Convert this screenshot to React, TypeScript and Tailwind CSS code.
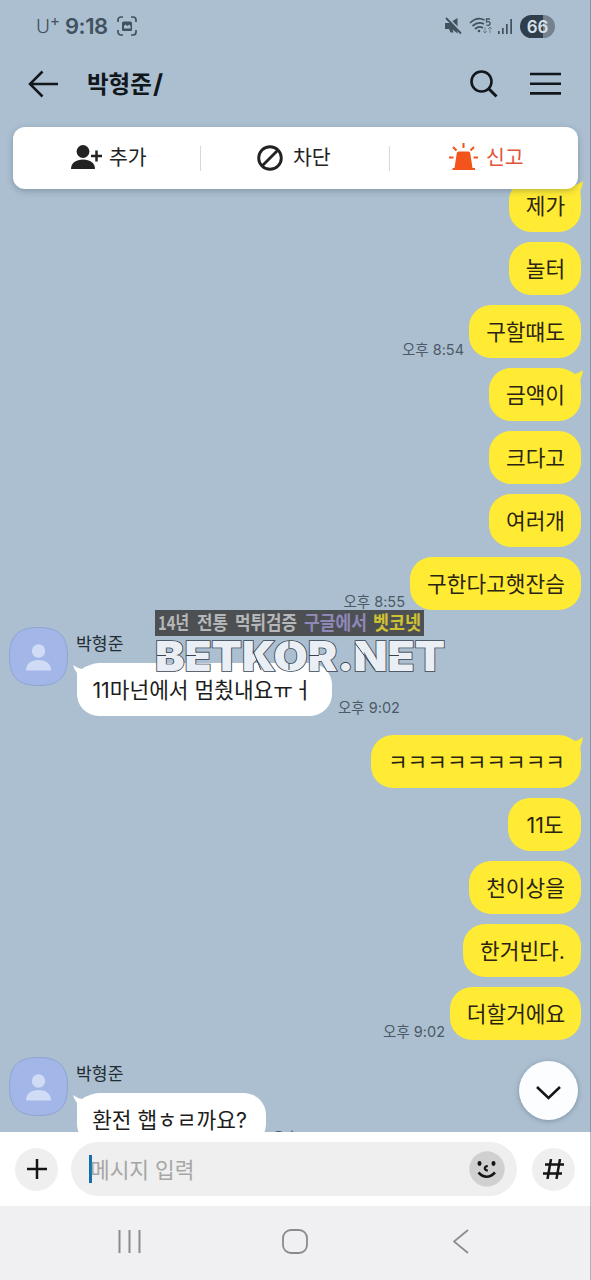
import React from 'react';

// ============================================
// TYPES
// ============================================

interface SentMessage {
  text: string;
  width: string;
  time?: string;
  tail?: boolean;
}

// ============================================
// DATA
// ============================================

const firstBlock: SentMessage[] = [
  { text: '제가', width: 'w-[72px]', tail: true },
  { text: '놀터', width: 'w-[72px]' },
  { text: '구할떄도', width: 'w-[112px]', time: '오후 8:54' },
  { text: '금액이', width: 'w-[92px]', tail: true },
  { text: '크다고', width: 'w-[92px]' },
  { text: '여러개', width: 'w-[92px]' },
  { text: '구한다고햇잔슴', width: 'w-[171px]', time: '오후 8:55' },
];

const secondBlock: SentMessage[] = [
  { text: 'ㅋㅋㅋㅋㅋㅋㅋㅋㅋ', width: 'w-[210px]', tail: true },
  { text: '11도', width: 'w-[73px]' },
  { text: '천이상을', width: 'w-[112px]' },
  { text: '한거빈다.', width: 'w-[118px]' },
  { text: '더할거에요', width: 'w-[131px]', time: '오후 9:02' },
];

// ============================================
// STATUS BAR
// ============================================

const StatusBar: React.FC = () => (
  <div className="flex h-[52px] items-center justify-between pl-[36px] pr-[36px] text-[#41525f]">
    <div className="flex items-center">
      <span className="text-[19px] leading-none font-light">U</span>
      <span className="-mt-[12px] text-[15px] leading-none">+</span>
      <span className="ml-[5px] text-[22px] leading-none font-semibold tracking-[-0.4px]">9:18</span>
      <svg className="ml-[9px] h-[20px] w-[20px]" viewBox="0 0 20 20" fill="none" stroke="currentColor" strokeWidth="1.7">
        <path d="M1 6V4a3 3 0 0 1 3-3h2M14 1h2a3 3 0 0 1 3 3v2M19 14v2a3 3 0 0 1-3 3h-2M6 19H4a3 3 0 0 1-3-3v-2" />
        <path d="M5 7q0-1.500 1.500-1.500h7Q15 5.500 15 7v6.500q0 1.500-1.500 1.500h-7Q5 15 5 13.500z" fill="currentColor" stroke="none" />
        <path d="M7 12.500V10l1.500-1.500 2 1.500 2-1.500L13.500 10v2.500z" fill="#abbfd0" stroke="none" />
      </svg>
    </div>
    <div className="flex items-center">
      <svg className="h-[18px] w-[18px]" viewBox="0 0 18 18" fill="currentColor">
        <path d="M1 6h4.500L13.500 1v15.500L8.500 12.500l1 3H6.500L5 12H1z" />
        <path d="M3.500.5l14 14.500" stroke="#abbfd0" strokeWidth="2" />
        <path d="M2 1l15 15.500" stroke="currentColor" strokeWidth="1.800" />
      </svg>
      <svg className="ml-[7px] h-[18px] w-[24px]" viewBox="0 0 24 18" fill="none" stroke="currentColor" strokeWidth="1.700">
        <path d="M1 6Q8-1 15.500 3M3.500 9Q9 4 15 7M6 12Q10 8.500 14 11" />
        <circle cx="10" cy="14" r="1.300" fill="currentColor" stroke="none" />
        <path d="M21 2h-3.500v3c3-1 4 .5 3.500 2s-2 1.800-3.700 1" strokeWidth="1.300" />
        <path d="M16 10v6m-2-2 2 2 2-2M21 16v-6m-2 2 2-2 2 2" strokeWidth="1" opacity=".5" />
      </svg>
      <svg className="ml-[4px] h-[17px] w-[16px]" viewBox="0 0 16 17" fill="currentColor">
        <path d="M1 13h1.700v3H1zM5 10h1.700v6H5zM9 6h1.700v10H9zM13.300 1H15v15h-1.700z" />
      </svg>
      <div className="ml-[7px] flex h-[23px] w-[35px] items-center justify-center rounded-full bg-[linear-gradient(90deg,#303d4a_66%,#74828f_66%)] pt-[2px] text-[17px] leading-none font-semibold text-[#d5e0ea]">
        66
      </div>
    </div>
  </div>
);

// ============================================
// HEADER
// ============================================

const ChatHeader: React.FC = () => (
  <header className="flex h-[75px] items-center pb-[12px] pl-[28px] pr-[30px] text-[#12171c]">
    <svg className="h-[28px] w-[31px]" viewBox="0 0 31 28" fill="none" stroke="currentColor" strokeWidth="2.500">
      <path d="M14.500 1.500 2 14l12.500 12.500M2 14h28" />
    </svg>
    <h1 className="ml-[28px] flex-1 text-[23.500px] leading-none font-bold">
      박형준<span className="ml-px text-[26px]">/</span>
    </h1>
    <svg className="h-[28px] w-[28px]" viewBox="0 0 28 28" fill="none" stroke="currentColor" strokeWidth="2.600">
      <circle cx="11.500" cy="11.500" r="10" />
      <path d="m18.500 18.500 8 8" strokeWidth="3" />
    </svg>
    <svg className="ml-[32px] h-[24px] w-[31px]" viewBox="0 0 31 24" stroke="currentColor" strokeWidth="2.600">
      <path d="M0 2h31M0 11.700h31M0 21.400h31" />
    </svg>
  </header>
);

const ActionCard: React.FC = () => (
  <div className="relative z-10 mr-[13px] -mb-[10px] ml-[13px] flex h-[62px] items-center rounded-[12px] bg-white text-[20.500px] leading-none text-[#222] shadow-[0_2px_6px_rgba(40,60,80,0.3)]">
    <div className="flex w-[187px] items-center pl-[58px]">
      <svg className="mb-[2px] h-[24px] w-[32px]" viewBox="0 0 32 24" fill="#222">
        <circle cx="12" cy="6.500" r="6.400" />
        <path d="M0 24c0-6 5-9.500 12-9.500S24 18 24 24z" />
        <path d="M20 11h11M25.500 5.500v11" stroke="#222" strokeWidth="2.500" />
      </svg>
      <span className="ml-[6px]">추가</span>
    </div>
    <div className="h-[25px] w-px bg-[#d8d8d8]" />
    <div className="flex w-[188px] items-center pl-[56px]">
      <svg className="h-[26px] w-[26px]" viewBox="0 0 26 26" fill="none" stroke="#222" strokeWidth="2.900">
        <circle cx="13" cy="13" r="11.300" />
        <path d="m5 21 16-16" />
      </svg>
      <span className="ml-[10px]">차단</span>
    </div>
    <div className="h-[25px] w-px bg-[#d8d8d8]" />
    <div className="flex flex-1 items-center pl-[59px] text-[#e2553a]">
      <svg className="mb-[4px] h-[27px] w-[29px]" viewBox="0 0 29 27" fill="#f2541b">
        <path d="M9.500 8.500h10q1.500 0 1.700 1.500L23.500 25H26v2H3.500v-2h2L7.800 10Q8 8.500 9.500 8.500z" />
        <path d="M14.500 0v5M4 4l3.500 3.500M25 4l-3.500 3.500M0 14.500h4.500M24.500 14.500H29" stroke="#f2541b" strokeWidth="2" />
      </svg>
      <span className="ml-[8px]">신고</span>
    </div>
  </div>
);

// ============================================
// MESSAGES
// ============================================

const SentBubble: React.FC<{ message: SentMessage }> = ({ message }) => (
  <div className="flex h-[63px] items-start justify-end pr-[10px]">
    {message.time && (
      <span className="mt-[37px] mr-[5px] text-[14.500px] leading-[16px] text-[#4c5a66]">{message.time}</span>
    )}
    <div
      className={`relative flex h-[53px] items-center justify-center rounded-[22px] bg-[#ffeb33] pt-[3px] pl-[1px] text-[21.400px] leading-none whitespace-nowrap text-[#2b2413] ${message.width}`}
    >
      {message.text}
      {message.tail && (
        <svg className="absolute top-[1px] -right-[2px] h-[20px] w-[22px]" viewBox="0 0 22 20" fill="#ffeb33">
          <path d="M4 1Q10 2 14 5 18 4 22 1 21.500 6 19.500 10V20H4z" />
        </svg>
      )}
    </div>
  </div>
);

interface ReceivedProps {
  text: string;
  width: string;
  time: string;
}

const ReceivedMessage: React.FC<ReceivedProps> = ({ text, width, time }) => (
  <div className="flex items-start pl-[9px]">
    <div className="h-[59px] w-[59px] shrink-0">
      <svg viewBox="0 0 59 59" fill="none">
        <path d="M29.500.5C50 .5 58.500 9 58.500 29.500S50 58.500 29.500 58.500.5 50 .5 29.500 9 .5 29.500.5z" fill="#a2b6e8" stroke="#8fa3d4" />
        <circle cx="29.500" cy="24" r="6.700" fill="#d0dbf5" />
        <path d="M17 43.500c0-7 5-10.500 12.500-10.500S42 36.500 42 43.500z" fill="#d0dbf5" />
      </svg>
    </div>
    <div className="ml-[8px]">
      <div className="flex h-[36px] items-start pt-[8px] text-[17.200px] leading-[18px] text-[#232b32]">박형준</div>
      <div className="ml-px flex items-start">
        <div className={`relative flex h-[53px] items-center justify-center rounded-[22px] bg-white pt-[3px] pr-[4px] text-[21.400px] leading-none whitespace-nowrap text-[#1d1d1d] ${width}`}>
          <svg className="absolute top-[1px] -left-[4px] h-[20px] w-[22px]" viewBox="0 0 22 20" fill="#fff">
            <path d="M19 1Q12 2 9 5 4 4 0 1 1 5 4 9V20H19z" />
          </svg>
          <span className="relative">{text}</span>
        </div>
        <span className="mt-[37px] ml-[6px] text-[14.500px] leading-[16px] text-[#4c5a66]">{time}</span>
      </div>
    </div>
  </div>
);

// ============================================
// WATERMARK
// ============================================

const Watermark: React.FC = () => (
  <div className="pointer-events-none absolute top-[610px] left-[155px] z-20 w-[290px]">
    <svg className="block" width="290" height="64" viewBox="0 0 290 64">
      <rect width="269" height="26" fill="#4d5053" />
      <g fontSize="19" fontWeight="700" fontFamily="Noto Sans CJK KR">
        <text x="3" y="20" textLength="31" lengthAdjust="spacingAndGlyphs" fill="#b5b7b9">14년</text>
        <text x="42" y="20" textLength="31" lengthAdjust="spacingAndGlyphs" fill="#b5b7b9">전통</text>
        <text x="80" y="20" textLength="62" lengthAdjust="spacingAndGlyphs" fill="#b5b7b9">먹튀검증</text>
        <text x="149" y="20" textLength="63" lengthAdjust="spacingAndGlyphs" fill="#8d88b8">구글에서</text>
        <text x="218" y="20" textLength="48" lengthAdjust="spacingAndGlyphs" fill="#cfc233">벳코넷</text>
      </g>
      <text
        x="0"
        y="60.500"
        fontFamily="Inter"
        fontWeight="900"
        fontSize="41"
        textLength="290"
        lengthAdjust="spacingAndGlyphs"
        fill="#e9eff5"
        stroke="#3a4550"
        strokeWidth="1.600"
        paintOrder="stroke"
      >
        BETKOR.NET
      </text>
      {/* stencil cuts */}
      <path
        d="M2 45.500h9M31 45.500h10M98 41l8 19M134 31v7M134 53v7M154 45.500h10M200 33l20 27M234 45.500h10"
        fill="none"
        stroke="#3a4550"
        strokeWidth="1"
      />
    </svg>
  </div>
);

// ============================================
// BOTTOM BARS
// ============================================

const InputBar: React.FC = () => (
  <div className="flex h-[74px] shrink-0 items-center bg-white pl-[15px]">
    <div className="flex h-[43px] w-[43px] items-center justify-center rounded-full bg-[#efefef]">
      <svg width="20" height="20" viewBox="0 0 20 20" stroke="#151515" strokeWidth="2.500">
        <path d="M0 10h20M10 0v20" />
      </svg>
    </div>
    <div className="ml-[13px] flex h-[54px] w-[446px] items-center rounded-full bg-[#efefef] pr-[12px] pl-[18px]">
      <div className="h-[28px] w-[3px] bg-[#1470ab]" />
      <span className="-ml-[2px] flex-1 pt-[4px] text-[21.400px] leading-none text-[#a6a6a6]">메시지 입력</span>
      <svg width="36" height="36" viewBox="0 0 36 36">
        <circle cx="18" cy="18" r="17.700" fill="#d0d0d0" />
        <ellipse cx="10.500" cy="12.500" rx="2" ry="2.400" fill="#151515" />
        <ellipse cx="24.500" cy="12.500" rx="2" ry="2.400" fill="#151515" />
        <path d="M18.800 15q-3 .3-3 2.300t3 2.300" fill="none" stroke="#151515" strokeWidth="2.200" />
        <path d="M9.500 21.500q8 8.500 16.500 0" fill="none" stroke="#151515" strokeWidth="2.600" />
      </svg>
    </div>
    <div className="ml-[15px] flex h-[43px] w-[43px] items-center justify-center rounded-full bg-[#efefef]">
      <svg width="21" height="20" viewBox="0 0 21 20" stroke="#151515" strokeWidth="2.500">
        <path d="M8 0 4.500 20M17 0l-3.500 20M2 5.500h19M0 14.500h19" />
      </svg>
    </div>
  </div>
);

const NavigationBar: React.FC = () => (
  <div className="flex h-[74px] shrink-0 items-start bg-[#f0f0f2] pt-[23px] pl-[118px]">
    <svg width="24" height="25" viewBox="0 0 24 25" stroke="#8b8b8d" strokeWidth="2">
      <path d="M1.500 1v23M11.500 1v23M21.500 1v23" />
    </svg>
    <svg className="ml-[140px]" width="26" height="25" viewBox="0 0 26 25" fill="none" stroke="#8b8b8d" strokeWidth="1.800">
      <rect x="1" y="1" width="24" height="23" rx="8" />
    </svg>
    <svg className="ml-[145px]" width="16" height="25" viewBox="0 0 16 25" fill="none" stroke="#8b8b8d" strokeWidth="1.800">
      <path d="M15 1 1 12.500 15 24" />
    </svg>
  </div>
);

// ============================================
// APP
// ============================================

const App: React.FC = () => (
  <div className="relative flex h-[1280px] w-[591px] flex-col overflow-hidden bg-[#abbfd0] font-['Inter','Noto_Sans_CJK_KR',sans-serif]">
    <StatusBar />
    <ChatHeader />
    <ActionCard />
    <main className="relative min-h-0 flex-1 overflow-hidden">
      {firstBlock.map((message) => (
        <SentBubble key={message.text} message={message} />
      ))}
      <div className="mt-[7px]">
        <ReceivedMessage text="11마넌에서 멈췄내요ㅠㅓ" width="w-[255px]" time="오후 9:02" />
      </div>
      <div className="mt-[19px]">
        {secondBlock.map((message) => (
          <SentBubble key={message.text} message={message} />
        ))}
      </div>
      <div className="mt-[7px]">
        <ReceivedMessage text="환전 햅ㅎㄹ까요?" width="w-[189px]" time="오후 9:02" />
      </div>
      <button
        aria-label="맨 아래로"
        className="absolute right-[13px] bottom-[12px] flex h-[59px] w-[59px] items-center justify-center rounded-full bg-[#fbfdff] shadow-[0_1px_5px_rgba(40,60,80,0.35)]"
      >
        <svg className="mt-[5px]" width="25" height="14" viewBox="0 0 25 14" fill="none" stroke="#151515" strokeWidth="2.500">
          <path d="m1 1 11.500 11L24 1" />
        </svg>
      </button>
    </main>
    <InputBar />
    <NavigationBar />
    <Watermark />
    <div className="pointer-events-none absolute inset-y-0 right-0 w-px bg-[#3c5a78]/40" />
  </div>
);

export default App;
